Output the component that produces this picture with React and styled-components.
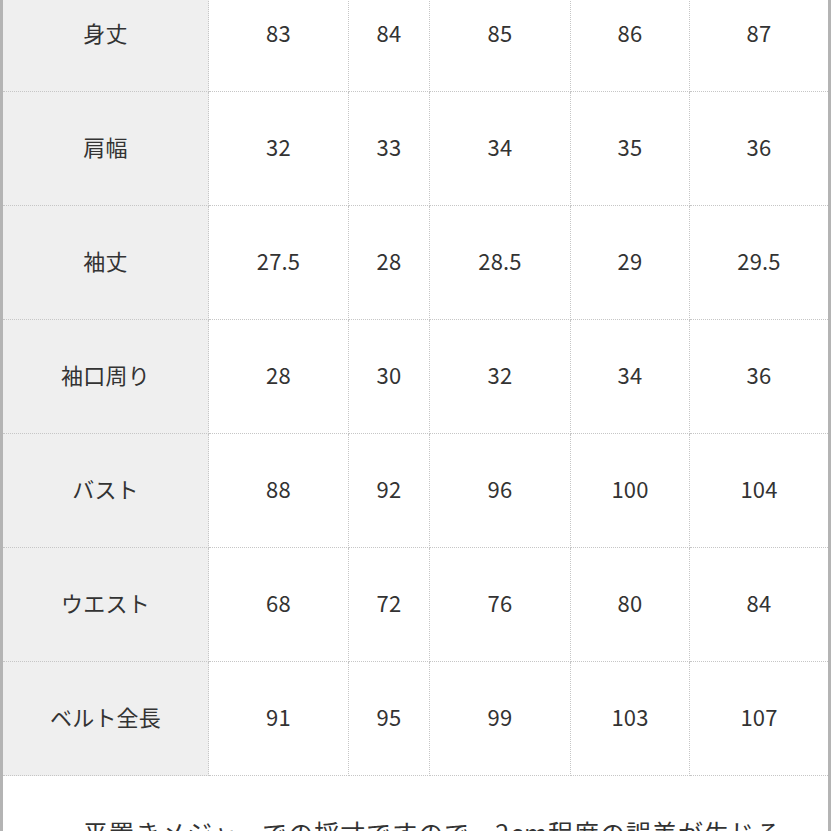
import styled, { createGlobalStyle } from 'styled-components';

const GlobalStyle = createGlobalStyle`
    html, body {
        margin: 0;
        padding: 0;
        background: #fff;
        overflow: hidden;
    }
    body {
        font-family: "Noto Sans CJK JP", "Noto Sans", sans-serif;
        color: #333;
    }
`

const SizeTable = styled.div`
    margin-top: -22px;
    width: 831px;
    box-sizing: border-box;
    border-left: 3px solid #b4b4b4;
    border-right: 3px solid #b4b4b4;
`

const Grid = styled.div`
    display: grid;
    grid-template-columns: 206px 140px 81px 141px 119px 138px;
    grid-auto-rows: 114px;
`

const Cell = styled.div`
    box-sizing: border-box;
    display: flex;
    align-items: center;
    justify-content: center;
    font-size: 22px;
    letter-spacing: 0.2px;
    background: ${props => props.label ? '#efefef' : '#fff'};
    border-bottom: 1px dotted #c6c6c6;
    border-right: ${props => props.last ? 'none' : '1px dotted #c6c6c6'};
    padding-bottom: 5px;
`

const Note = styled.p`
    margin: 0;
    padding: 38px 30px 20px 80px;
    font-size: 25px;
    line-height: 1.5;
    text-align: left;
    letter-spacing: 1px;
`

const rows = [
    { name: '身丈', values: ['83', '84', '85', '86', '87'] },
    { name: '肩幅', values: ['32', '33', '34', '35', '36'] },
    { name: '袖丈', values: ['27.5', '28', '28.5', '29', '29.5'] },
    { name: '袖口周り', values: ['28', '30', '32', '34', '36'] },
    { name: 'バスト', values: ['88', '92', '96', '100', '104'] },
    { name: 'ウエスト', values: ['68', '72', '76', '80', '84'] },
    { name: 'ベルト全長', values: ['91', '95', '99', '103', '107'] },
];

export default function App() {
    return (
        <>
            <GlobalStyle />
            <SizeTable>
                <Grid>
                    {rows.map((row) => (
                        <>
                            <Cell key={row.name} label>{row.name}</Cell>
                            {row.values.map((v, i) => (
                                <Cell key={row.name + i} last={i === row.values.length - 1}>{v}</Cell>
                            ))}
                        </>
                    ))}
                </Grid>
                <Note>平置きメジャーでの採寸ですので、2cm程度の誤差が生じる場合がございます。</Note>
            </SizeTable>
        </>
    )
}
